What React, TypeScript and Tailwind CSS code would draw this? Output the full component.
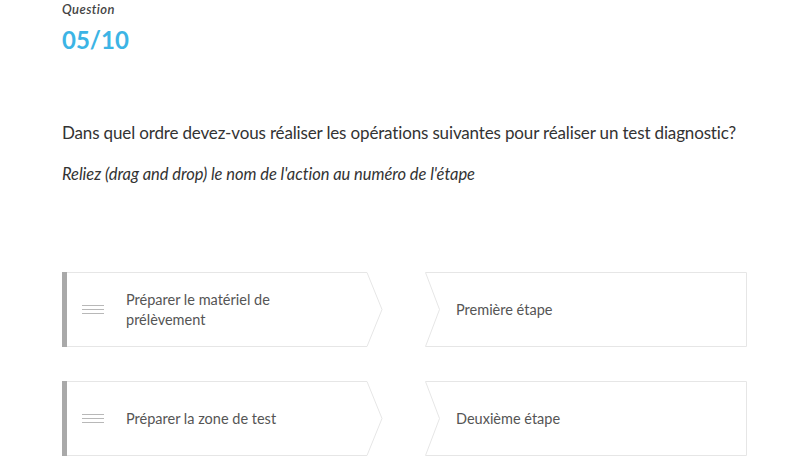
import React from 'react';

const actions = ['Préparer le matériel de prélèvement', 'Préparer la zone de test'];
const steps = ['Première étape', 'Deuxième étape'];

function ActionCard({ label }: { label: string }) {
  return (
    <div className="relative h-[75px] w-[321px]">
      <svg className="absolute inset-0" width="321" height="75" viewBox="0 0 321 75">
        <path d="M0.5 0.5 H305 L320 37.5 L305 74.5 H0.5 Z" fill="#fff" stroke="#e6e6e6" />
        <rect x="0" y="0" width="5" height="75" fill="#a9a9a9" />
      </svg>
      <div className="relative flex h-full items-center pl-[20px]">
        <svg width="22" height="9" viewBox="0 0 22 9" className="shrink-0">
          <path d="M0 0.5 H22 M0 4.5 H22 M0 8.5 H22" stroke="#b8b8b8" strokeWidth="1" />
        </svg>
        <p className="ml-[22px] w-[190px] text-[14.5px] leading-[20px] text-[#555]">{label}</p>
      </div>
    </div>
  );
}

function StepCard({ label }: { label: string }) {
  return (
    <div className="relative h-[75px] w-[322px]">
      <svg className="absolute inset-0" width="322" height="75" viewBox="0 0 322 75">
        <path d="M0.5 0.5 H321.5 V74.5 H0.5 L14.5 37.5 Z" fill="#fff" stroke="#e6e6e6" />
      </svg>
      <div className="relative flex h-full items-center pl-[31px]">
        <p className="text-[14.5px] leading-[20px] text-[#555]">{label}</p>
      </div>
    </div>
  );
}

export default function App() {
  return (
    <div className="h-[460px] w-[800px] overflow-hidden bg-white pl-[62px] font-['Lato',sans-serif]">
      <p className="pt-[1px] text-[13px] font-semibold italic leading-[16px] tracking-[0.4px] text-[#444]">Question</p>
      <h1 className="mt-[9px] text-[24px] font-bold leading-[28px] text-[#3cb4e5]">05/10</h1>
      <p className="mt-[67px] text-[17px] leading-[24px] tracking-[-0.15px] text-[#333]">
        Dans quel ordre devez-vous réaliser les opérations suivantes pour réaliser un test diagnostic?
      </p>
      <p className="mt-[18px] text-[16.5px] italic leading-[22px] tracking-[-0.05px] text-[#333]">
        Reliez (drag and drop) le nom de l'action au numéro de l'étape
      </p>
      <div className="mt-[87px] flex flex-col gap-[34px]">
        {actions.map((a, i) => (
          <div key={i} className="flex gap-[42px]">
            <ActionCard label={a} />
            <StepCard label={steps[i]} />
          </div>
        ))}
      </div>
    </div>
  );
}
